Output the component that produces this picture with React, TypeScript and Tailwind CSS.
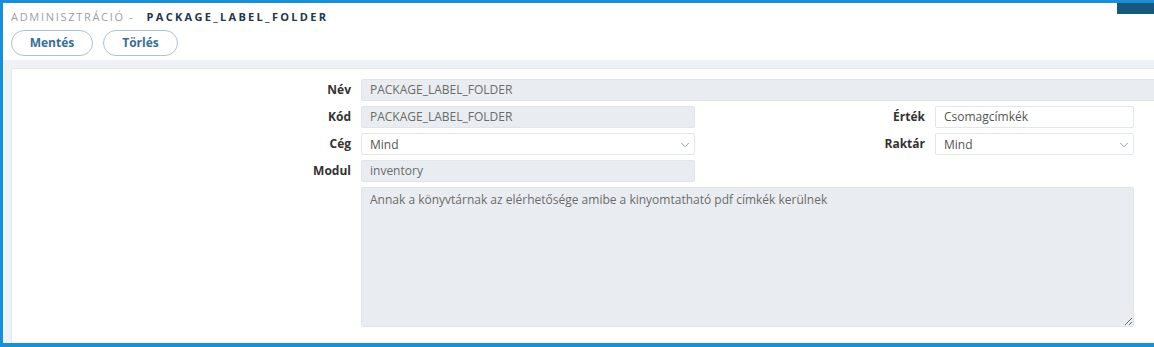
import { ChevronDown } from 'lucide-react';

const font = "font-['Open_Sans','Noto_Sans',sans-serif]";

const Label = ({ text, width }: { text: string; width: string }) => (
  <div className={`${width} shrink-0 text-right text-[12px] font-bold text-[#333] leading-[22px]`}>{text}</div>
);

const ReadOnlyField = ({ value, width }: { value: string; width: string }) => (
  <div className={`${width} shrink-0 h-[22px] bg-[#e9edf1] border border-[#dfe5ea] rounded-[2px] px-[8px] text-[12px] leading-[20px] text-[#6b6b6b] whitespace-nowrap overflow-hidden`}>
    {value}
  </div>
);

const InputField = ({ value, width }: { value: string; width: string }) => (
  <div className={`${width} shrink-0 h-[22px] bg-white border border-[#e1e6ea] rounded-[2px] px-[8px] text-[12px] leading-[20px] text-[#555]`}>
    {value}
  </div>
);

const SelectField = ({ value, width }: { value: string; width: string }) => (
  <div className={`${width} shrink-0 h-[22px] bg-white border border-[#e1e6ea] rounded-[2px] pl-[8px] pr-[2px] flex justify-between text-[12px] leading-[22px] text-[#555]`}>
    <span>{value}</span>
    <ChevronDown size={14} strokeWidth={1.6} className="text-[#7f9bb3] mt-[4px]" />
  </div>
);

export default function App() {
  return (
    <div className={`${font} w-[1154px] h-[347px] overflow-hidden bg-white border-t-[3px] border-l-[3px] border-b-4 border-[#1b8fd6] flex flex-col`}>
      {/* Header */}
      <div className="relative h-[57px] shrink-0 px-[8px] pt-[7px]">
        <div className="absolute right-0 top-0 w-[37px] h-[11px] bg-[#17577e]" />
        <div className="flex items-center h-[14px] text-[11px] tracking-[1.7px] whitespace-nowrap">
          <span className="text-[#9aa0a6]">ADMINISZTRÁCIÓ -</span>
          <span className="ml-[12px] font-bold text-[#23364a] tracking-[2.3px]">PACKAGE_LABEL_FOLDER</span>
        </div>
        <div className="flex gap-[10px] mt-[6px]">
          <button className="w-[82px] h-[26px] rounded-full border border-[#a9c3d5] text-[12px] font-bold text-[#3a6d96] bg-white">
            Mentés
          </button>
          <button className="w-[75px] h-[26px] rounded-full border border-[#a9c3d5] text-[12px] font-bold text-[#3a6d96] bg-white">
            Törlés
          </button>
        </div>
      </div>

      {/* Body */}
      <div className="flex-1 bg-[#eef2f6] pl-[8px] pt-[8px] flex">
        <div className="flex-1 bg-white border-l border-t border-[#e2e8ee] pt-[10px] flex flex-col gap-[5px]">
          <div className="flex gap-[10px]">
            <Label text="Név" width="w-[339px]" />
            <ReadOnlyField value="PACKAGE_LABEL_FOLDER" width="w-[820px]" />
          </div>
          <div className="flex gap-[10px]">
            <Label text="Kód" width="w-[339px]" />
            <ReadOnlyField value="PACKAGE_LABEL_FOLDER" width="w-[334px]" />
            <Label text="Érték" width="w-[220px]" />
            <InputField value="Csomagcímkék" width="w-[199px]" />
          </div>
          <div className="flex gap-[10px]">
            <Label text="Cég" width="w-[339px]" />
            <SelectField value="Mind" width="w-[334px]" />
            <Label text="Raktár" width="w-[220px]" />
            <SelectField value="Mind" width="w-[199px]" />
          </div>
          <div className="flex gap-[10px]">
            <Label text="Modul" width="w-[339px]" />
            <ReadOnlyField value="inventory" width="w-[334px]" />
          </div>
          <div className="flex gap-[10px]">
            <div className="w-[339px] shrink-0" />
            <textarea
              readOnly
              value="Annak a könyvtárnak az elérhetősége amibe a kinyomtatható pdf címkék kerülnek"
              className="w-[773px] h-[140px] bg-[#e9edf1] border border-[#dfe5ea] rounded-[2px] px-[8px] pt-[3px] text-[12px] leading-[18px] text-[#6b6b6b] outline-none"
            />
          </div>
        </div>
      </div>
    </div>
  );
}
